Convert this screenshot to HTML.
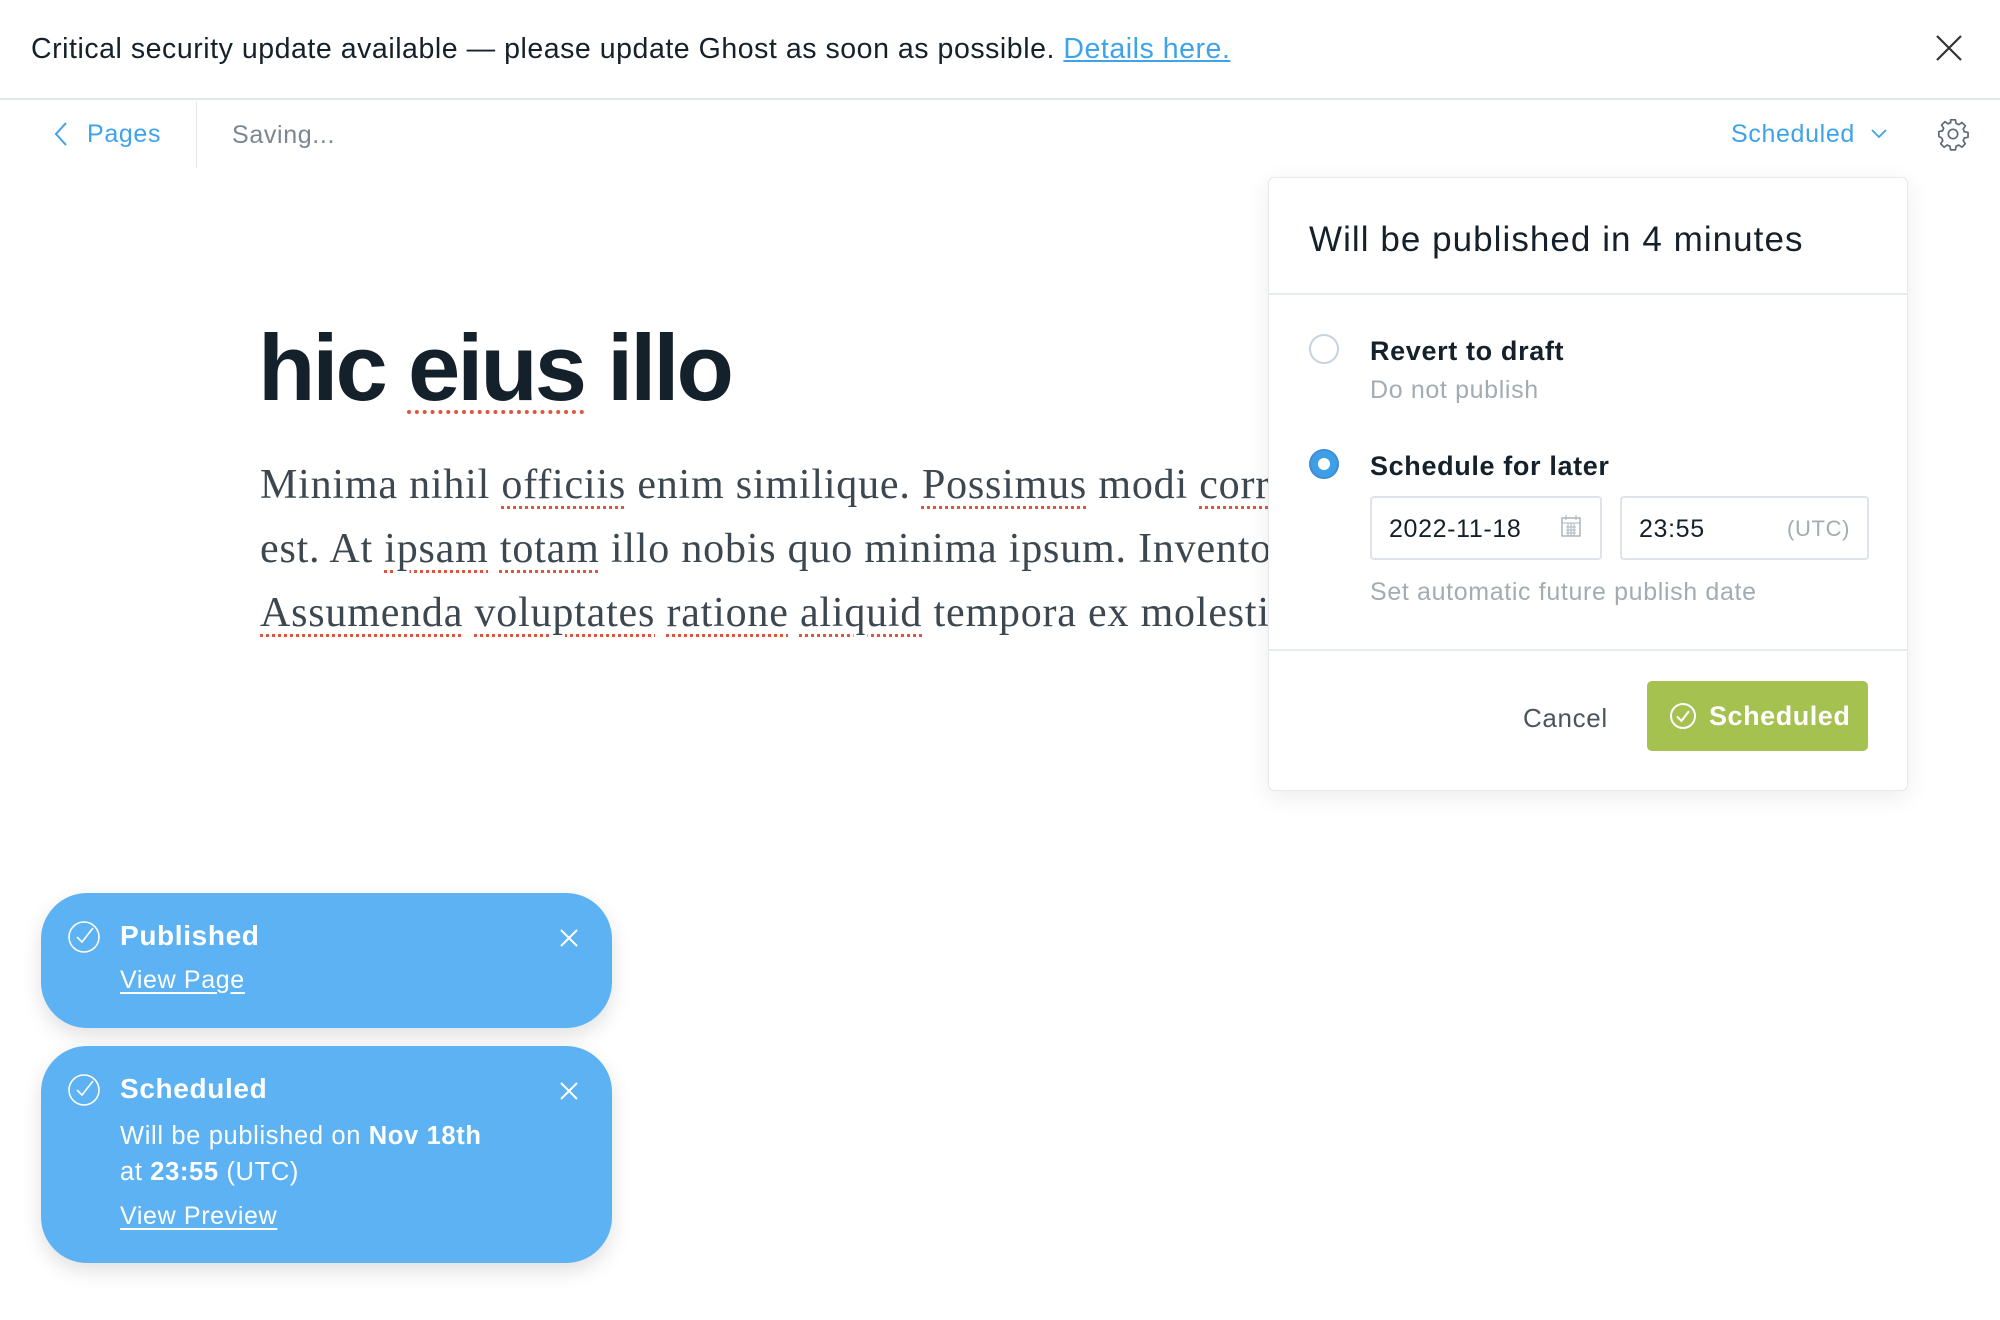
<!DOCTYPE html>
<html><head><meta charset="utf-8"><style>
*{box-sizing:border-box;margin:0;padding:0}
body{width:2000px;height:1320px;position:relative;overflow:hidden;background:#fff;font-family:"Liberation Sans",sans-serif;color:#15212a;letter-spacing:.04em}
.abs{position:absolute}
.banner{left:0;top:0;width:2000px;height:100px;border-bottom:2px solid #e3e6e9}
.banner .t{left:31px;top:33px;font-size:28.5px;color:#15212a;white-space:nowrap;letter-spacing:.019em}
.banner a{color:#3ea3e8;text-decoration:underline}
.nav{font-size:25px}
.body{left:260px;top:453px;font-family:"Liberation Serif",serif;font-size:42px;letter-spacing:.8px;line-height:64px;color:#3d4750;white-space:nowrap}
.sp{text-decoration:underline dotted #e25440 3px;text-underline-offset:8px}
.pop{left:1268px;top:177px;width:640px;height:614px;background:#fff;border:1px solid #e6e9ec;border-radius:6px;box-shadow:0 6px 24px rgba(0,0,0,.08)}
.toast{left:41px;width:571px;background:#5cb2f2;border-radius:46px;box-shadow:0 8px 20px rgba(0,0,0,.12);color:#fff}
.toast .ti{position:absolute;left:79px;font-size:28px;font-weight:bold}
.toast u{text-underline-offset:4px}
</style></head><body>
<div class="abs banner"><div class="abs t">Critical security update available — please update Ghost as soon as possible. <a>Details here.</a></div>
<svg class="abs" style="left:1936px;top:35px" width="26" height="26" viewBox="0 0 26 26"><path d="M1 1L25 25M25 1L1 25" stroke="#333" stroke-width="2.2"/></svg></div>

<svg class="abs" style="left:54px;top:122px" width="14" height="24" viewBox="0 0 14 24"><path d="M12 1L2 12L12 23" stroke="#3ea3e8" stroke-width="2" fill="none"/></svg>
<div class="abs nav" style="left:87px;top:120px;color:#3ea3e8">Pages</div>
<div class="abs" style="left:196px;top:102px;width:1px;height:66px;background:#e3e6e9"></div>
<div class="abs nav" style="left:232px;top:121px;color:#7c8690">Saving...</div>
<div class="abs nav" style="left:1731px;top:120px;color:#3ea3e8">Scheduled</div>
<svg class="abs" style="left:1871px;top:129px" width="16" height="10" viewBox="0 0 16 10"><path d="M1 1L8 8L15 1" stroke="#3ea3e8" stroke-width="1.8" fill="none"/></svg>
<svg class="abs" style="left:1936px;top:117px" width="34" height="34" viewBox="0 0 24 24"><path d="M10.3 2h3.4l.5 2.6 1.9.8 2.2-1.5 2.4 2.4-1.5 2.2.8 1.9 2.6.5v3.4l-2.6.5-.8 1.9 1.5 2.2-2.4 2.4-2.2-1.5-1.9.8-.5 2.6h-3.4l-.5-2.6-1.9-.8-2.2 1.5-2.4-2.4 1.5-2.2-.8-1.9L2 13.7v-3.4l2.6-.5.8-1.9-1.5-2.2 2.4-2.4 2.2 1.5 1.9-.8z" fill="none" stroke="#5d6a75" stroke-width="1.2" stroke-linejoin="round"/><circle cx="12" cy="12" r="3.3" fill="none" stroke="#5d6a75" stroke-width="1.2"/></svg>

<div class="abs" style="left:258px;top:308px;font-size:94px;font-weight:bold;letter-spacing:-3px;color:#15212a;line-height:120px">hic <span class="sp" style="text-decoration-thickness:4px;text-underline-offset:10px">eius</span> illo</div>
<div class="abs body">Minima nihil <span class="sp">officiis</span> enim similique. <span class="sp">Possimus</span> modi <span class="sp">corrupti</span> dolorem<br>est. At <span class="sp">ipsam</span> <span class="sp">totam</span> illo nobis quo minima ipsum. Inventore quia<br><span class="sp">Assumenda</span> <span class="sp">voluptates</span> <span class="sp">ratione</span> <span class="sp">aliquid</span> tempora ex molestiae aut.</div>

<div class="abs pop">
<div class="abs" style="left:40px;top:42px;font-size:35px;color:#15212a;letter-spacing:.03em">Will be published in 4 minutes</div>
<div class="abs" style="left:0;top:115px;width:638px;height:2px;background:#e6ecf1"></div>
<div class="abs" style="left:40px;top:156px;width:30px;height:30px;border-radius:50%;border:2px solid #c6d2dc"></div>
<div class="abs" style="left:101px;top:158px;font-size:27px;font-weight:bold;color:#15212a">Revert to draft</div>
<div class="abs" style="left:101px;top:198px;font-size:25px;color:#a3abb3">Do not publish</div>
<div class="abs" style="left:40px;top:271px;width:30px;height:30px;border-radius:50%;background:#3f9ee6;border:2px solid #3a8fd8"><div class="abs" style="left:7px;top:7px;width:12px;height:12px;border-radius:50%;background:#fff"></div></div>
<div class="abs" style="left:101px;top:273px;font-size:27px;font-weight:bold;color:#15212a">Schedule for later</div>
<div class="abs" style="left:101px;top:318px;width:232px;height:64px;border:2px solid #dde3e8;border-radius:4px"><div class="abs" style="left:17px;top:17px;font-size:25px;color:#15212a">2022-11-18</div>
<svg class="abs" style="left:189px;top:16px" width="20" height="24" viewBox="0 0 20 24"><rect x="1" y="4" width="18" height="18" fill="none" stroke="#aab3bb" stroke-width="1.5"/><path d="M1 9H19M5 13H15M5 16H15M5 19H15M7 9V22M10 9V22M13 9V22M5 1V6M15 1V6" stroke="#aab3bb" stroke-width="1"/></svg></div>
<div class="abs" style="left:351px;top:318px;width:249px;height:64px;border:2px solid #dde3e8;border-radius:4px"><div class="abs" style="left:17px;top:17px;font-size:25px;color:#15212a">23:55</div><div class="abs" style="left:165px;top:18px;font-size:22px;color:#a3abb3">(UTC)</div></div>
<div class="abs" style="left:101px;top:400px;font-size:25px;color:#a3abb3">Set automatic future publish date</div>
<div class="abs" style="left:0;top:471px;width:638px;height:2px;background:#e6ecf1"></div>
<div class="abs" style="left:254px;top:525px;font-size:26px;color:#4a555f">Cancel</div>
<div class="abs" style="left:378px;top:503px;width:221px;height:70px;background:#a5c150;border-radius:5px">
<svg class="abs" style="left:22px;top:21px" width="28" height="28" viewBox="0 0 28 28"><circle cx="14" cy="14" r="12" fill="none" stroke="#fff" stroke-width="2"/><path d="M8 14.5L12.5 19L20 9" fill="none" stroke="#fff" stroke-width="2"/></svg>
<div class="abs" style="left:62px;top:20px;font-size:27px;font-weight:bold;color:#fff;letter-spacing:.02em">Scheduled</div></div>
</div>

<div class="abs toast" style="top:893px;height:135px">
<svg class="abs" style="left:26px;top:27px" width="34" height="34" viewBox="0 0 34 34"><circle cx="17" cy="17" r="15" fill="none" stroke="#fff" stroke-width="1.6"/><path d="M10 17L15 22L26 8" fill="none" stroke="#fff" stroke-width="1.6"/></svg>
<div class="ti" style="top:27px">Published</div>
<div class="abs" style="left:79px;top:73px;font-size:25px"><u>View Page</u></div>
<svg class="abs" style="left:519px;top:36px" width="18" height="18" viewBox="0 0 18 18"><path d="M1 1L17 17M17 1L1 17" stroke="#fff" stroke-width="2"/></svg>
</div>
<div class="abs toast" style="top:1046px;height:217px">
<svg class="abs" style="left:26px;top:27px" width="34" height="34" viewBox="0 0 34 34"><circle cx="17" cy="17" r="15" fill="none" stroke="#fff" stroke-width="1.6"/><path d="M10 17L15 22L26 8" fill="none" stroke="#fff" stroke-width="1.6"/></svg>
<div class="ti" style="top:27px">Scheduled</div>
<div class="abs" style="left:79px;top:72px;font-size:25.5px;line-height:36px">Will be published on <b>Nov 18th</b><br>at <b>23:55</b> (UTC)</div>
<div class="abs" style="left:79px;top:156px;font-size:25px"><u>View Preview</u></div>
<svg class="abs" style="left:519px;top:36px" width="18" height="18" viewBox="0 0 18 18"><path d="M1 1L17 17M17 1L1 17" stroke="#fff" stroke-width="2"/></svg>
</div>
</body></html>
